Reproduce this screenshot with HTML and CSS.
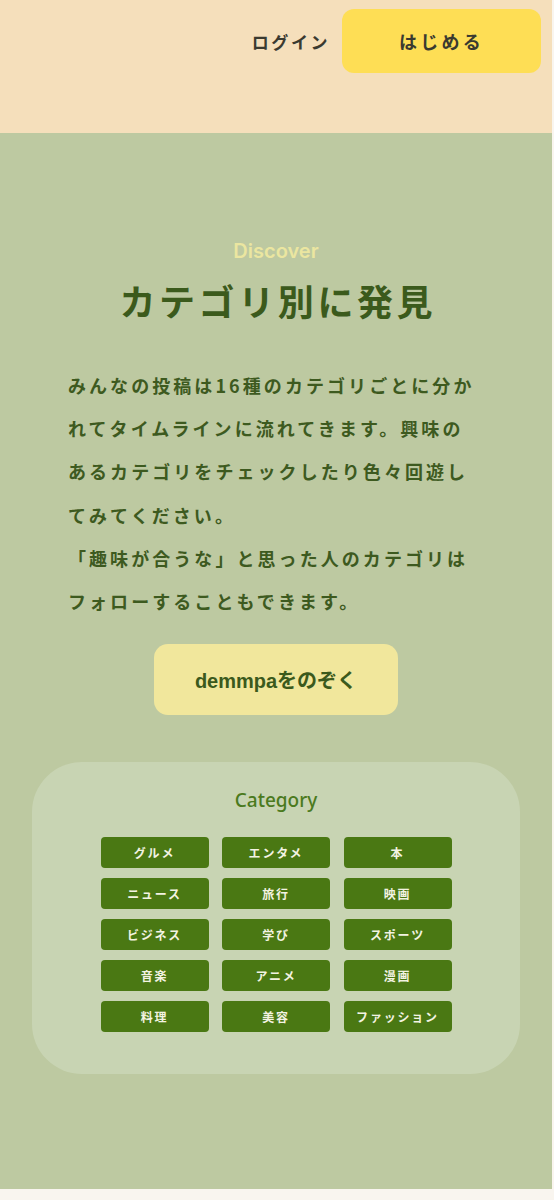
FILE: index.html
```html
<!DOCTYPE html>
<html lang="ja">
<head>
<meta charset="utf-8">
<title>demmpa</title>
<link rel="stylesheet" href="styles.css">
</head>
<body>
<div class="page">
  <header class="header">
    <nav class="nav">
      <a class="login" href="#">ログイン</a>
      <a class="start" href="#">はじめる</a>
    </nav>
  </header>
  <section class="discover">
    <p class="eyebrow">Discover</p>
    <h1 class="title">カテゴリ別に発見</h1>
    <p class="lead">みんなの投稿は16種のカテゴリごとに分かれてタイムラインに流れてきます。興味のあるカテゴリをチェックしたり色々回遊してみてください。<br>「趣味が合うな」と思った人のカテゴリはフォローすることもできます。</p>
    <a class="peek" href="#">demmpaをのぞく</a>
    <div class="card">
      <h2 class="card-title">Category</h2>
      <ul class="cats">
        <li class="cat">グルメ</li>
        <li class="cat">エンタメ</li>
        <li class="cat">本</li>
        <li class="cat">ニュース</li>
        <li class="cat">旅行</li>
        <li class="cat">映画</li>
        <li class="cat">ビジネス</li>
        <li class="cat">学び</li>
        <li class="cat">スポーツ</li>
        <li class="cat">音楽</li>
        <li class="cat">アニメ</li>
        <li class="cat">漫画</li>
        <li class="cat">料理</li>
        <li class="cat">美容</li>
        <li class="cat">ファッション</li>
      </ul>
    </div>
  </section>
</div>
</body>
</html>
```
FILE: styles.css
```css
* { box-sizing: border-box; }
html, body { margin: 0; padding: 0; }
body {
  background: #f9f5ef;
  font-family: "Noto Sans CJK JP", "Noto Sans", sans-serif;
}
.page {
  width: 552px;
}
.header {
  height: 133px;
  background: #f5dfbb;
}
.nav {
  display: flex;
  justify-content: flex-end;
  align-items: center;
  gap: 12px;
  padding: 9px 11px 0 0;
}
.login {
  color: #3a3a30;
  text-decoration: none;
  font-weight: 700;
  font-size: 17px;
  letter-spacing: 0.15em;
}
.start {
  display: flex;
  align-items: center;
  justify-content: center;
  width: 199px;
  height: 64px;
  border-radius: 12px;
  background: #fede55;
  color: #3a3a30;
  text-decoration: none;
  font-weight: 700;
  font-size: 18px;
  letter-spacing: 0.18em;
}
.discover {
  background: #bdc9a1;
  padding: 103px 0 115px;
  display: flex;
  flex-direction: column;
  align-items: center;
}
.eyebrow {
  margin: 0;
  font-family: Inter, "Noto Sans", sans-serif;
  font-weight: 600;
  font-size: 20px;
  line-height: 30px;
  color: #ebe6a0;
}
.title {
  margin: 9px 0 0;
  font-size: 36px;
  line-height: 50px;
  font-weight: 700;
  letter-spacing: 0.1em;
  color: #3b5a1c;
  padding-left: 0.1em;
}
.lead {
  margin: 39px 0 0;
  width: 416px;
  font-size: 18px;
  font-weight: 700;
  line-height: 43.2px;
  letter-spacing: 0.17em;
  color: #3d5a1f;
}
.peek {
  margin-top: 21px;
  width: 244px;
  height: 71px;
  border-radius: 14px;
  background: #f1e79c;
  display: flex;
  align-items: center;
  justify-content: center;
  color: #3b5a1c;
  text-decoration: none;
  font-family: "Liberation Sans", "Noto Sans CJK JP", sans-serif;
  font-weight: 700;
  font-size: 20px;
}
.card {
  margin-top: 47px;
  width: 488px;
  background: #c8d4b3;
  border-radius: 50px;
  padding: 24px 0 42px;
  display: flex;
  flex-direction: column;
  align-items: center;
}
.card-title {
  margin: 0;
  font-family: "Noto Sans", sans-serif;
  font-weight: 500;
  font-size: 19px;
  line-height: 28px;
  color: #4b7a1e;
}
.cats {
  list-style: none;
  margin: 23px 0 0;
  padding: 0;
  display: grid;
  grid-template-columns: repeat(3, 108px);
  column-gap: 13.5px;
  row-gap: 10px;
}
.cat {
  height: 31px;
  border-radius: 4px;
  background: #4a7813;
  color: #f3f3e2;
  font-size: 12px;
  font-weight: 700;
  letter-spacing: 0.15em;
  display: flex;
  align-items: center;
  justify-content: center;
}
```
